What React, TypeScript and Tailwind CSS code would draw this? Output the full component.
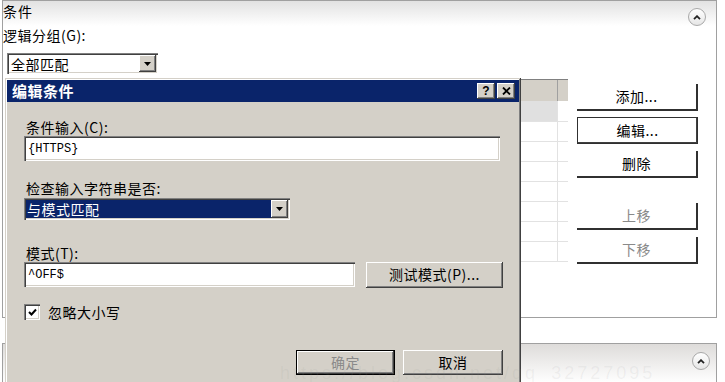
import React from 'react';

const cjk = { fontFamily: '"Noto Sans CJK SC", "Liberation Sans", sans-serif' };
const mono = { fontFamily: '"Liberation Mono", "Noto Sans CJK SC", monospace' };

const raised = 'bg-[#d4d0c8] shadow-[inset_-1px_-1px_#404040,inset_1px_1px_#ffffff,inset_-2px_-2px_#808080,inset_2px_2px_#d4d0c8]';
const sunken = 'bg-white shadow-[inset_1px_1px_#808080,inset_2px_2px_#404040,inset_-1px_-1px_#ffffff,inset_-2px_-2px_#d4d0c8]';

const sideButtons = [
  { label: '添加...', top: 'mt-[5px]', focus: false, disabled: false },
  { label: '编辑...', top: 'mt-[6px]', focus: true, disabled: false },
  { label: '删除', top: 'mt-[7px]', focus: false, disabled: false },
  { label: '上移', top: 'mt-[25px]', focus: false, disabled: true },
  { label: '下移', top: 'mt-[7px]', focus: false, disabled: true },
];

function DropArrow() {
  return (
    <div className={`${raised} w-[17px] h-full flex items-center justify-center shrink-0`}>
      <svg width="7" height="4" viewBox="0 0 7 4"><path d="M0 0h7L3.5 4z" fill="#000" /></svg>
    </div>
  );
}

function Collapse() {
  return (
    <div className="w-[18px] h-[18px] rounded-full border border-[#a8a8a8] bg-gradient-to-b from-white to-[#e6e6e6] flex items-center justify-center">
      <svg width="8" height="5" viewBox="0 0 8 5"><path d="M1 4.2 4 1.2l3 3" fill="none" stroke="#222" strokeWidth="1.8" /></svg>
    </div>
  );
}

export default function App() {
  const rows = [0, 1, 2, 3, 4, 5, 6, 7];
  return (
    <div className="relative w-[725px] h-[382px] overflow-hidden bg-white text-black" style={cjk}>
      {/* 条件 section */}
      <div className="ml-[2px] w-[715px] h-[318px] border border-[#a0a0a0]">
        <div className="h-[25px] bg-gradient-to-b from-[#e2e2e2] to-white flex items-start justify-between">
          <span className="text-[14px] leading-[18px] mt-[1px] tracking-[1px]">条件</span>
          <div className="mt-[7px] mr-[10px]"><Collapse /></div>
        </div>
        <div className="text-[14px] leading-[16px] tracking-[0.5px] mt-[1px]">逻辑分组(G):</div>
        <div className={`${sunken} ml-[4px] mt-[10px] w-[151px] h-[21px] flex items-center p-[2px]`}>
          <span className="flex-1 text-[14px] leading-[16px] pl-[2px] tracking-[0.5px]">全部匹配</span>
          <DropArrow />
        </div>
        <div className="flex mt-[5px] ml-[3px]">
          <div className="w-[562px] h-[185px] border-t border-[#808080] flex flex-col">
            <div className="h-[21px] bg-[#d4d0c8] flex shrink-0">
              <div className="flex-1 border-r border-[#a0a0a0]" />
              <div className="w-[10px]" />
            </div>
            {rows.map((r) => (
              <div key={r} className={`flex ${r === 0 ? 'h-[21px] bg-[#e0e0e0]' : 'h-[20px]'} border-b border-[#e2e2e2]`}>
                <div className="flex-1 border-r border-[#e2e2e2]" />
                <div className="w-[10px] bg-white" />
              </div>
            ))}
          </div>
          <div className="ml-[9px] w-[121px] flex flex-col">
            {sideButtons.map((b) => (
              <div
                key={b.label}
                className={`${b.top} h-[27px] flex items-center justify-center text-[14px] tracking-[0.5px] ${
                  b.focus
                    ? 'border border-[#303030] shadow-[inset_-1px_-1px_#404040]'
                    : 'border-r-2 border-b-2 border-[#303030]'
                } ${b.disabled ? 'text-[#8a8a8a]' : 'text-black'}`}
              >
                {b.label}
              </div>
            ))}
          </div>
        </div>
      </div>

      {/* next collapsed section */}
      <div className="ml-[2px] mt-[25px] w-[715px] h-[40px] border-t border-l border-r border-[#a0a0a0] bg-gradient-to-b from-[#dedcda] to-white flex justify-end">
        <div className="mt-[8px] mr-[6px]"><Collapse /></div>
      </div>

      {/* 编辑条件 dialog */}
      <div className="absolute left-[5px] top-[78px] w-[516px] h-[330px] bg-[#d4d0c8] p-[2px] shadow-[inset_-1px_-1px_#404040,inset_1px_1px_#d4d0c8,inset_-2px_-2px_#808080,inset_2px_2px_#ffffff]">
        <div className="h-[22px] bg-[#0a246a] flex items-center justify-between pl-[5px] pr-[4px]">
          <span className="text-white font-bold text-[15px] leading-[18px] tracking-[0.5px]">编辑条件</span>
          <div className="flex gap-[2px]">
            <div className={`${raised} w-[18px] h-[16px] flex items-center justify-center text-[12px] font-bold leading-none`} style={{ fontFamily: '"Liberation Sans", sans-serif' }}>?</div>
            <div className={`${raised} w-[18px] h-[16px] flex items-center justify-center`}>
              <svg width="9" height="8" viewBox="0 0 9 8"><path d="M1 0.5 8 7.5M8 0.5 1 7.5" stroke="#000" strokeWidth="1.8" /></svg>
            </div>
          </div>
        </div>
        <div className="pl-[17px] pr-[16px]">
          <div className="mt-[17px] text-[14px] leading-[16px] tracking-[0.5px] pl-[2px]">条件输入(C):</div>
          <div className={`${sunken} mt-[1px] w-[476px] h-[25px] flex items-center px-[4px] text-[12px]`} style={mono}>{'{HTTPS}'}</div>
          <div className="mt-[19px] text-[14px] leading-[16px] tracking-[0.5px] pl-[2px]">检查输入字符串是否:</div>
          <div className={`${sunken} mt-[2px] w-[266px] h-[22px] flex items-center p-[2px]`}>
            <div className="flex-1 h-full bg-[#0a246a] text-white text-[14px] leading-[18px] pl-[1px] tracking-[0.5px]">与模式匹配</div>
            <DropArrow />
          </div>
          <div className="mt-[25px] text-[14px] leading-[16px] tracking-[0.5px] pl-[2px]">模式(T):</div>
          <div className="flex items-center h-[27px]">
            <div className={`${sunken} w-[331px] h-[25px] flex items-center px-[4px] text-[12px]`} style={mono}>^OFF$</div>
            <div className={`${raised} ml-[11px] w-[137px] h-[26px] flex items-center justify-center text-[14px] tracking-[0.5px]`}>测试模式(P)...</div>
          </div>
          <div className="mt-[16px] flex items-center h-[16px]">
            <div className={`${sunken} w-[16px] h-[16px] flex items-center justify-center`}>
              <svg width="9" height="8" viewBox="0 0 9 8"><path d="M1 4 3.5 6.5 8 1.5" fill="none" stroke="#000" strokeWidth="2" /></svg>
            </div>
            <span className="ml-[8px] text-[14px] tracking-[0.5px]">忽略大小写</span>
          </div>
          <div className="mt-[30px] flex justify-end gap-[8px] pr-[0px]">
            <div className="w-[99px] h-[25px] border border-[#000] flex">
              <div className={`${raised} flex-1 flex items-center justify-center text-[14px] text-[#8a8a8a] tracking-[0.5px]`}>确定</div>
            </div>
            <div className={`${raised} w-[100px] h-[25px] flex items-center justify-center text-[14px] tracking-[0.5px]`}>取消</div>
          </div>
        </div>
      </div>

      {/* faint watermark */}
      <div className="absolute left-[280px] top-[364px] text-[18px] leading-[18px] text-[#909090]/10 tracking-[3px] whitespace-nowrap" style={{ fontFamily: '"Liberation Sans", sans-serif' }}>
        https://blog.csdn.net/qq_32727095
      </div>
    </div>
  );
}
